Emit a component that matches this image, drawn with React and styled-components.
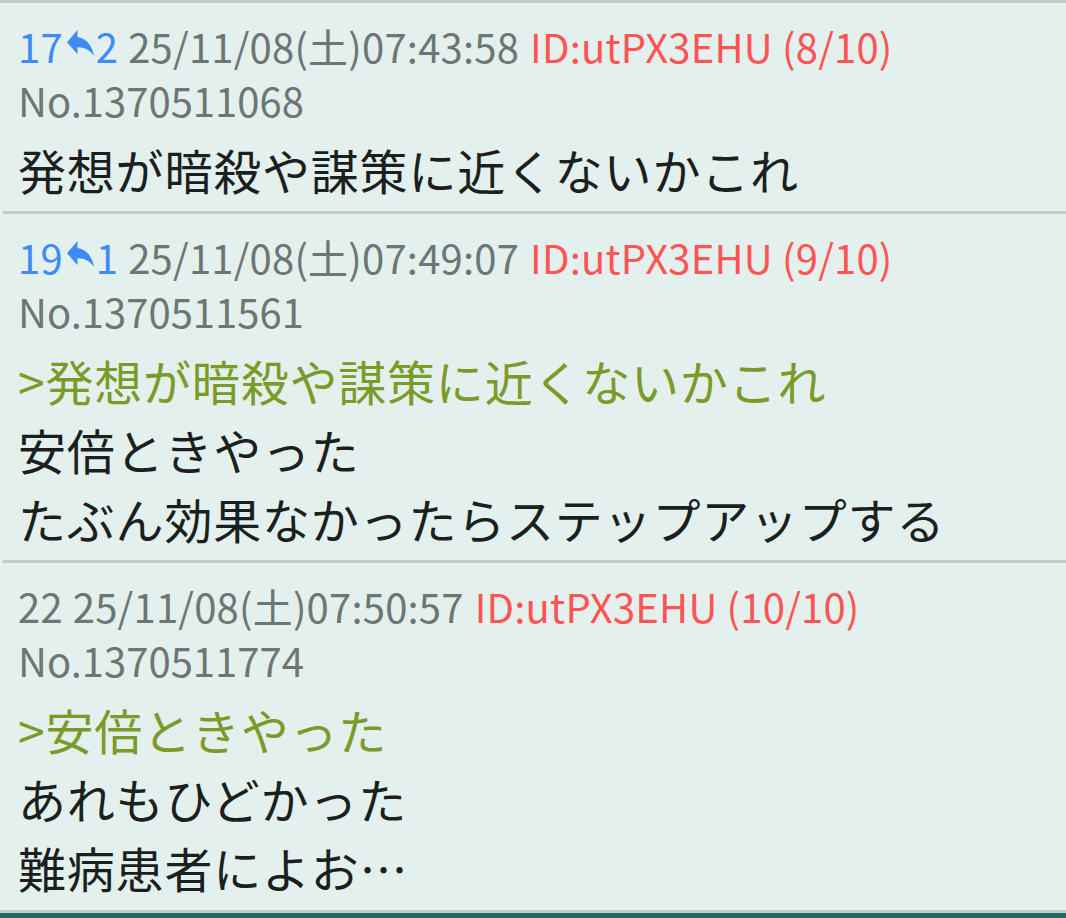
import React from "react"
import styled, { createGlobalStyle } from "styled-components"

const GlobalStyle = createGlobalStyle`
  html, body {
    margin: 0;
    padding: 0;
    background: #e3f0ed;
  }
  body {
    font-family: "Noto Sans CJK JP", "Noto Sans", sans-serif;
    width: 1066px;
    height: 918px;
    overflow: hidden;
  }
`

const Page = styled.div`
  width: 1066px;
  height: 918px;
  display: flex;
  flex-direction: column;
  background: #e3f0ed;
  border-top: 3px solid #bfcdc9;
  box-sizing: border-box;
`

const List = styled.div`
  flex: 1;
  display: flex;
  flex-direction: column;
  padding-left: 3px;
`

const Post = styled.div`
  padding: 16px 0 7px 15px;
  border-bottom: ${(p) => (p.last ? "none" : "3px solid #bfcdc9")};
  flex: ${(p) => (p.last ? 1 : "none")};
`

const Header = styled.div`
  display: flex;
  align-items: center;
  font-size: 40px;
  line-height: 54px;
  letter-spacing: 0.2px;
  color: #6c7774;
  white-space: nowrap;
`

const Num = styled.span`
  color: ${(p) => (p.linked ? "#3f8bf5" : "#6c7774")};
  display: inline-flex;
  align-items: center;
`

const ReplyIcon = styled.svg`
  width: 27px;
  height: 26px;
  margin: 0 2px 6px 4px;
  fill: #3f8bf5;
`

const Date = styled.span`
  margin-left: 10px;
`

const Id = styled.span`
  margin-left: 11px;
  color: #ff5454;
`

const No = styled.div`
  font-size: 40px;
  line-height: 54px;
  color: #6c7774;
`

const Body = styled.div`
  margin-top: 8px;
  font-size: 48px;
  line-height: 69px;
  letter-spacing: 0.8px;
  color: #1b1f1e;
`

const Quote = styled.div`
  color: #7b9b28;
`

const Footer = styled.div`
  height: 8px;
  border-top: 3px solid #bfcdc9;
  background: #1d6a5e;
  box-sizing: border-box;
`

const posts = [
  {
    num: 17,
    replies: 2,
    date: "25/11/08(土)07:43:58",
    id: "ID:utPX3EHU (8/10)",
    no: "No.1370511068",
    quote: null,
    lines: ["発想が暗殺や謀策に近くないかこれ"],
  },
  {
    num: 19,
    replies: 1,
    date: "25/11/08(土)07:49:07",
    id: "ID:utPX3EHU (9/10)",
    no: "No.1370511561",
    quote: ">発想が暗殺や謀策に近くないかこれ",
    lines: ["安倍ときやった", "たぶん効果なかったらステップアップする"],
  },
  {
    num: 22,
    replies: 0,
    date: "25/11/08(土)07:50:57",
    id: "ID:utPX3EHU (10/10)",
    no: "No.1370511774",
    quote: ">安倍ときやった",
    lines: ["あれもひどかった", "難病患者によお…"],
  },
]

function Reply() {
  return (
    <ReplyIcon viewBox="3 5 18 15" preserveAspectRatio="none">
      <path d="M10 9V5l-7 7 7 7v-4.1c5 0 8.5 1.6 11 5.1-1-5-4-10-11-11z" />
    </ReplyIcon>
  )
}

export default function App() {
  return (
    <>
      <GlobalStyle />
      <Page>
        <List>
          {posts.map((post, i) => (
            <Post key={post.no} last={i === posts.length - 1}>
              <Header>
                <Num linked={post.replies > 0}>
                  {post.num}
                  {post.replies > 0 && <Reply />}
                  {post.replies > 0 && post.replies}
                </Num>
                <Date>{post.date}</Date>
                <Id>{post.id}</Id>
              </Header>
              <No>{post.no}</No>
              <Body>
                {post.quote && <Quote>{post.quote}</Quote>}
                {post.lines.map((line) => (
                  <div key={line}>{line}</div>
                ))}
              </Body>
            </Post>
          ))}
        </List>
        <Footer />
      </Page>
    </>
  )
}
